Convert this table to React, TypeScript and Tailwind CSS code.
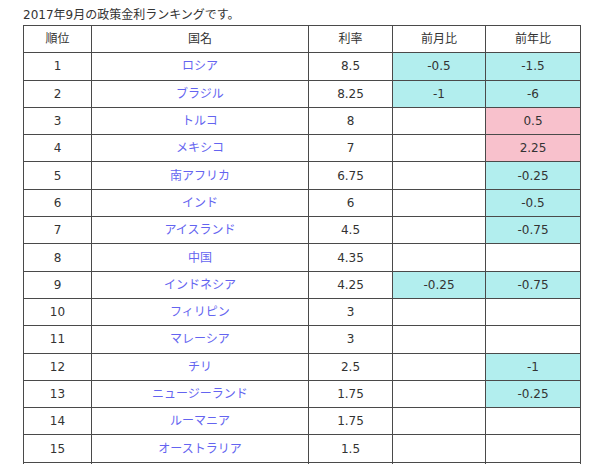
import React from "react";

type Tone = "cyan" | "pink" | undefined;

interface RateRow {
  rank: string;
  country: string;
  rate: string;
  mom?: string;
  momTone?: Tone;
  yoy?: string;
  yoyTone?: Tone;
}

const rows: RateRow[] = [
  { rank: "1", country: "ロシア", rate: "8.5", mom: "-0.5", momTone: "cyan", yoy: "-1.5", yoyTone: "cyan" },
  { rank: "2", country: "ブラジル", rate: "8.25", mom: "-1", momTone: "cyan", yoy: "-6", yoyTone: "cyan" },
  { rank: "3", country: "トルコ", rate: "8", yoy: "0.5", yoyTone: "pink" },
  { rank: "4", country: "メキシコ", rate: "7", yoy: "2.25", yoyTone: "pink" },
  { rank: "5", country: "南アフリカ", rate: "6.75", yoy: "-0.25", yoyTone: "cyan" },
  { rank: "6", country: "インド", rate: "6", yoy: "-0.5", yoyTone: "cyan" },
  { rank: "7", country: "アイスランド", rate: "4.5", yoy: "-0.75", yoyTone: "cyan" },
  { rank: "8", country: "中国", rate: "4.35" },
  { rank: "9", country: "インドネシア", rate: "4.25", mom: "-0.25", momTone: "cyan", yoy: "-0.75", yoyTone: "cyan" },
  { rank: "10", country: "フィリピン", rate: "3" },
  { rank: "11", country: "マレーシア", rate: "3" },
  { rank: "12", country: "チリ", rate: "2.5", yoy: "-1", yoyTone: "cyan" },
  { rank: "13", country: "ニュージーランド", rate: "1.75", yoy: "-0.25", yoyTone: "cyan" },
  { rank: "14", country: "ルーマニア", rate: "1.75" },
  { rank: "15", country: "オーストラリア", rate: "1.5" },
  // next row only peeks in at the bottom edge
  { rank: "", country: "", rate: "" },
];

const toneClass = (tone: Tone) => {
  switch (tone) {
    case "cyan":
      return "bg-[#b2eeee]";
    case "pink":
      return "bg-[#f8c1cc]";
    default:
      return "bg-white";
  }
};

const cell = "border border-[#4a4a4a] text-center align-middle p-0";

export default function App() {
  return (
    <div
      className="w-[600px] h-[464px] overflow-hidden bg-white pl-[23px] pt-[6px] text-[12px] text-[#333333]"
      style={{ fontFamily: '"DejaVu Sans", "Noto Sans CJK JP", sans-serif' }}
    >
      <p className="leading-[19px]">2017年9月の政策金利ランキングです。</p>
      <table className="table-fixed border-collapse w-[557px]">
        <colgroup>
          <col className="w-[68px]" />
          <col className="w-[217px]" />
          <col className="w-[84px]" />
          <col className="w-[93px]" />
          <col className="w-[95px]" />
        </colgroup>
        <thead>
          <tr className="h-[27.3px]">
            <th className={`${cell} font-normal`}>順位</th>
            <th className={`${cell} font-normal`}>国名</th>
            <th className={`${cell} font-normal`}>利率</th>
            <th className={`${cell} font-normal`}>前月比</th>
            <th className={`${cell} font-normal`}>前年比</th>
          </tr>
        </thead>
        <tbody>
          {rows.map((r, i) => (
            <tr key={i} className="h-[27.3px]">
              <td className={cell}>{r.rank}</td>
              <td className={`${cell} text-[#6464f0]`}>{r.country}</td>
              <td className={cell}>{r.rate}</td>
              <td className={`${cell} ${toneClass(r.momTone)}`}>{r.mom}</td>
              <td className={`${cell} ${toneClass(r.yoyTone)}`}>{r.yoy}</td>
            </tr>
          ))}
        </tbody>
      </table>
    </div>
  );
}
